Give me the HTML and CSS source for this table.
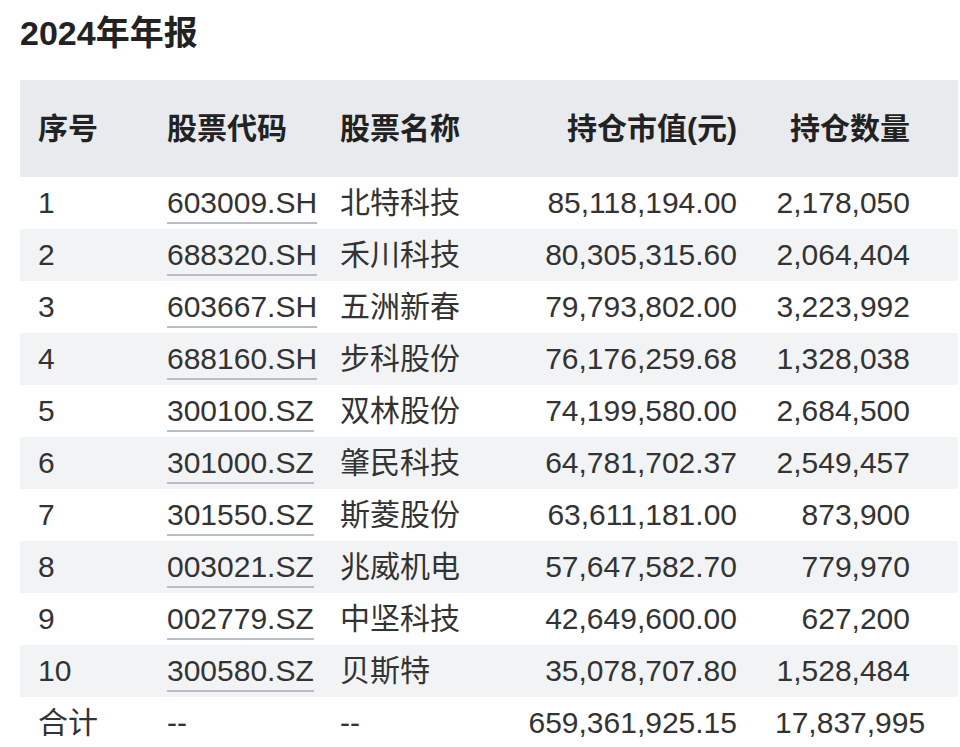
FILE: index.html
```html
<!DOCTYPE html>
<html lang="zh-CN">
<head>
<meta charset="utf-8">
<link rel="stylesheet" href="styles.css">
</head>
<body>
<div class="page">
  <h1 class="title">2024年年报</h1>
  <div class="table">
    <div class="row head">
      <div class="c c1">序号</div>
      <div class="c c2">股票代码</div>
      <div class="c c3">股票名称</div>
      <div class="c c4">持仓市值(元)</div>
      <div class="c c5">持仓数量</div>
    </div>
    <div class="row">
      <div class="c c1">1</div><div class="c c2"><span class="code">603009.SH</span></div><div class="c c3">北特科技</div><div class="c c4">85,118,194.00</div><div class="c c5">2,178,050</div>
    </div>
    <div class="row alt">
      <div class="c c1">2</div><div class="c c2"><span class="code">688320.SH</span></div><div class="c c3">禾川科技</div><div class="c c4">80,305,315.60</div><div class="c c5">2,064,404</div>
    </div>
    <div class="row">
      <div class="c c1">3</div><div class="c c2"><span class="code">603667.SH</span></div><div class="c c3">五洲新春</div><div class="c c4">79,793,802.00</div><div class="c c5">3,223,992</div>
    </div>
    <div class="row alt">
      <div class="c c1">4</div><div class="c c2"><span class="code">688160.SH</span></div><div class="c c3">步科股份</div><div class="c c4">76,176,259.68</div><div class="c c5">1,328,038</div>
    </div>
    <div class="row">
      <div class="c c1">5</div><div class="c c2"><span class="code">300100.SZ</span></div><div class="c c3">双林股份</div><div class="c c4">74,199,580.00</div><div class="c c5">2,684,500</div>
    </div>
    <div class="row alt">
      <div class="c c1">6</div><div class="c c2"><span class="code">301000.SZ</span></div><div class="c c3">肇民科技</div><div class="c c4">64,781,702.37</div><div class="c c5">2,549,457</div>
    </div>
    <div class="row">
      <div class="c c1">7</div><div class="c c2"><span class="code">301550.SZ</span></div><div class="c c3">斯菱股份</div><div class="c c4">63,611,181.00</div><div class="c c5">873,900</div>
    </div>
    <div class="row alt">
      <div class="c c1">8</div><div class="c c2"><span class="code">003021.SZ</span></div><div class="c c3">兆威机电</div><div class="c c4">57,647,582.70</div><div class="c c5">779,970</div>
    </div>
    <div class="row">
      <div class="c c1">9</div><div class="c c2"><span class="code">002779.SZ</span></div><div class="c c3">中坚科技</div><div class="c c4">42,649,600.00</div><div class="c c5">627,200</div>
    </div>
    <div class="row alt">
      <div class="c c1">10</div><div class="c c2"><span class="code">300580.SZ</span></div><div class="c c3">贝斯特</div><div class="c c4">35,078,707.80</div><div class="c c5">1,528,484</div>
    </div>
    <div class="row">
      <div class="c c1">合计</div><div class="c c2">--</div><div class="c c3">--</div><div class="c c4">659,361,925.15</div><div class="c c5">17,837,995</div>
    </div>
  </div>
</div>
</body>
</html>
```
FILE: styles.css
```css
html, body {
  margin: 0;
  padding: 0;
  background: #ffffff;
}
body {
  font-family: "Liberation Sans", "Noto Sans CJK SC", sans-serif;
  color: #333333;
  overflow: hidden;
}
.page {
  padding: 0 0 0 20px;
  width: 940px;
}
.title {
  margin: 0;
  height: 80px;
  box-sizing: border-box;
  padding-top: 11px;
  font-size: 34px;
  line-height: 44px;
  font-weight: bold;
  color: #222222;
}
.table {
  width: 938px;
}
.row {
  display: grid;
  grid-template-columns: 129px 173px 158px 275px 203px;
  height: 52px;
  align-items: center;
  font-size: 30px;
  line-height: 40px;
  background: #ffffff;
}
.row.alt {
  background: #f2f3f5;
}
.row.head {
  height: 97px;
  background: #e8eaed;
  font-weight: bold;
  color: #222222;
}
.c {
  white-space: nowrap;
  box-sizing: border-box;
  min-width: 0;
}
.c1, .c2, .c3 {
  padding-left: 18px;
}
.c4 {
  text-align: right;
  padding-right: 18px;
}
.c5 {
  text-align: right;
  padding-left: 20px;
  padding-right: 48px;
}
.code {
  display: inline-block;
  line-height: 38px;
  border-bottom: 2px solid #b8bdc4;
}
```
